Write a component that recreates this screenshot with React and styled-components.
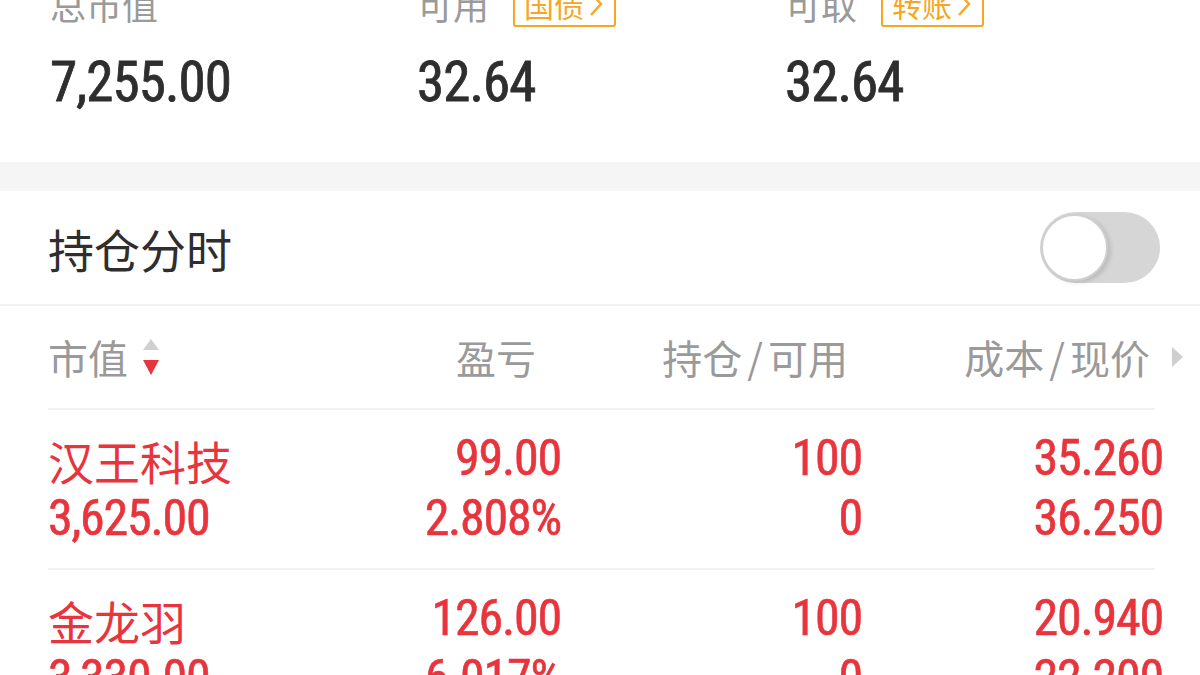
import styled, { createGlobalStyle } from "styled-components";

const GlobalStyle = createGlobalStyle`
  html, body {
    margin: 0;
    padding: 0;
    background: #ffffff;
    overflow: hidden;
  }
  * {
    box-sizing: border-box;
  }
`;

const CJK = `"Noto Sans CJK SC", "Noto Sans", sans-serif`;
const NUM = `"Liberation Sans Narrow", "Roboto Condensed", "DejaVu Sans Condensed", "Noto Sans CJK SC", sans-serif`;
const RED = "#e8343c";

const Page = styled.div`
  width: 1200px;
  height: 675px;
  overflow: hidden;
  background: #fff;
`;

const Summary = styled.section`
  display: grid;
  grid-template-columns: 367px 368px 1fr;
  padding: 0 0 50px 50px;
  margin-top: -24px;
`;

const SumCol = styled.div`
  display: flex;
  flex-direction: column;
  gap: 20px;
`;

const SumLabel = styled.div`
  height: 56px;
  display: flex;
  align-items: center;
  gap: 24px;
  font-family: ${CJK};
  font-size: 36px;
  color: #9a9a9a;
`;

const Tag = styled.span`
  height: 46px;
  display: inline-flex;
  align-items: center;
  gap: 5px;
  padding: 0 11px 0 9px;
  border: 2px solid #f6a623;
  border-radius: 3px;
  font-family: ${CJK};
  font-size: 30px;
  color: #f6a623;
`;

const SumValue = styled.div`
  height: 60px;
  line-height: 60px;
  font-family: ${NUM};
  font-size: 55px;
  letter-spacing: -0.9px;
  -webkit-text-stroke: 0.8px #2e2e2e;
  color: #2e2e2e;
`;

const Band = styled.div`
  height: 29px;
  background: #f5f5f5;
`;

const SwitchRow = styled.div`
  height: 115px;
  display: flex;
  align-items: center;
  justify-content: space-between;
  padding: 0 40px 0 48px;
  border-bottom: 2px solid #f2f2f2;
`;

const Title = styled.div`
  font-family: ${CJK};
  font-size: 46px;
  color: #2e2e2e;
`;

const Toggle = styled.div`
  position: relative;
  width: 120px;
  height: 71px;
  border-radius: 36px;
  background: #d6d6d6;
`;

const Knob = styled.div`
  position: absolute;
  left: 1px;
  top: 2px;
  width: 67px;
  height: 67px;
  border-radius: 50%;
  background: #fff;
  border: 2px solid #cfcfcf;
  box-shadow: 3px 2px 4px rgba(0, 0, 0, 0.12);
`;

const TableHead = styled.div`
  display: grid;
  grid-template-columns: 212px 301px 301px 301px;
  align-items: center;
  height: 104px;
  margin: 0 45px 0 48px;
  border-bottom: 2px solid #f2f2f2;
  font-family: ${CJK};
  font-size: 40px;
  color: #9a9a9a;
`;

const HeadCell = styled.div`
  display: flex;
  align-items: center;
  justify-content: ${(p) => (p.$left ? "flex-start" : "flex-end")};
  padding-right: ${(p) => p.$pr || 0}px;
  gap: ${(p) => p.$gap || 0}px;
`;

const Slash = styled.span`
  margin: 0 5px;
`;

const Row = styled.div`
  display: grid;
  grid-template-columns: 212px 301px 301px 301px;
  align-items: center;
  height: 160px;
  margin: 0 45px 0 48px;
  border-bottom: 2px solid #f2f2f2;
  color: ${RED};
`;

const Cell = styled.div`
  display: flex;
  flex-direction: column;
  align-items: ${(p) => (p.$left ? "flex-start" : "flex-end")};
  margin-top: -2px;
`;

const Name = styled.div`
  height: 60px;
  line-height: 60px;
  font-family: ${CJK};
  font-size: 46px;
  padding-top: 2px;
`;

const Num = styled.div`
  height: 60px;
  line-height: 60px;
  font-family: ${NUM};
  font-size: 50px;
  letter-spacing: -1.2px;
  -webkit-text-stroke: 0.6px ${RED};
`;

const Chevron = () => (
  <svg width="14" height="26" viewBox="0 0 14 26">
    <polyline points="2,2 12,13 2,24" fill="none" stroke="#f6a623" strokeWidth="2.4" />
  </svg>
);

const SortIcon = () => (
  <svg width="18" height="38" viewBox="0 0 18 38">
    <polygon points="9,1 17,12 1,12" fill="#d0d0d0" />
    <polygon points="1,22 17,22 9,37" fill="#e8343c" />
  </svg>
);

const RightArrow = () => (
  <svg width="11" height="20" viewBox="0 0 11 20" style={{ marginRight: -33 }}>
    <polygon points="0,0 11,10 0,20" fill="#cfcfcf" />
  </svg>
);

const positions = [
  { name: "汉王科技", value: "3,625.00", pl: "99.00", pct: "2.808%", hold: "100", avail: "0", cost: "35.260", price: "36.250" },
  { name: "金龙羽", value: "3,330.00", pl: "126.00", pct: "6.017%", hold: "100", avail: "0", cost: "20.940", price: "22.200" },
];

export default function App() {
  return (
    <Page>
      <GlobalStyle />
      <Summary>
        <SumCol>
          <SumLabel>总市值</SumLabel>
          <SumValue>7,255.00</SumValue>
        </SumCol>
        <SumCol>
          <SumLabel>
            可用
            <Tag>国债<Chevron /></Tag>
          </SumLabel>
          <SumValue>32.64</SumValue>
        </SumCol>
        <SumCol>
          <SumLabel>
            可取
            <Tag>转账<Chevron /></Tag>
          </SumLabel>
          <SumValue>32.64</SumValue>
        </SumCol>
      </Summary>
      <Band />
      <SwitchRow>
        <Title>持仓分时</Title>
        <Toggle>
          <Knob />
        </Toggle>
      </SwitchRow>
      <TableHead>
        <HeadCell $left $gap={14}>
          市值
          <SortIcon />
        </HeadCell>
        <HeadCell $pr={25}>盈亏</HeadCell>
        <HeadCell $pr={14}>
          <span>持仓<Slash>/</Slash>可用</span>
        </HeadCell>
        <HeadCell $pr={13} $gap={22}>
          <span>成本<Slash>/</Slash>现价</span>
          <RightArrow />
        </HeadCell>
      </TableHead>
      {positions.map((p) => (
        <Row key={p.name}>
          <Cell $left>
            <Name>{p.name}</Name>
            <Num>{p.value}</Num>
          </Cell>
          <Cell>
            <Num>{p.pl}</Num>
            <Num>{p.pct}</Num>
          </Cell>
          <Cell>
            <Num>{p.hold}</Num>
            <Num>{p.avail}</Num>
          </Cell>
          <Cell>
            <Num>{p.cost}</Num>
            <Num>{p.price}</Num>
          </Cell>
        </Row>
      ))}
    </Page>
  );
}
